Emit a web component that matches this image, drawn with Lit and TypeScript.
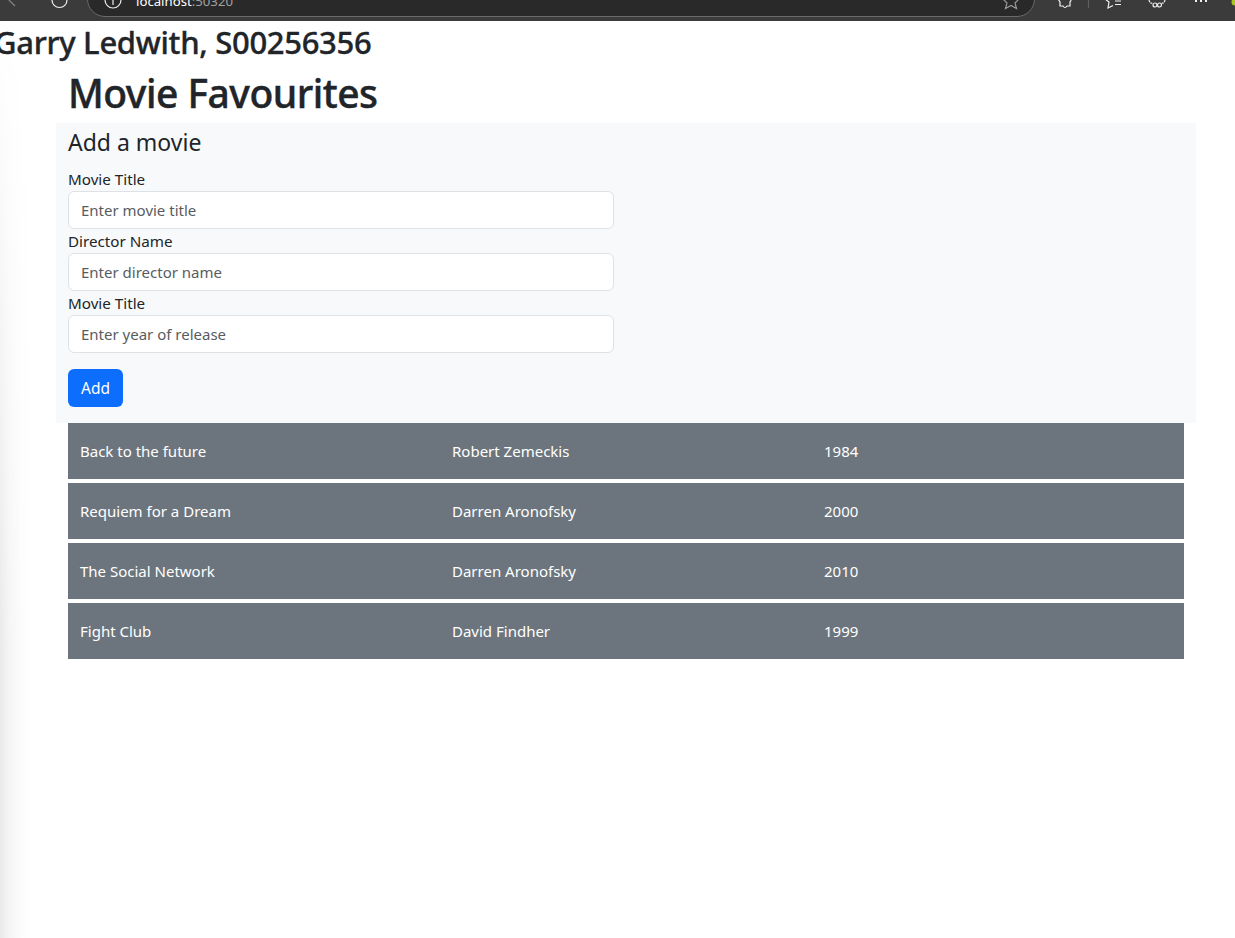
import { LitElement, css, html, svg } from "lit";
import { customElement } from "lit/decorators.js";

const movies = [
  { title: "Back to the future", director: "Robert Zemeckis", year: 1984 },
  { title: "Requiem for a Dream", director: "Darren Aronofsky", year: 2000 },
  { title: "The Social Network", director: "Darren Aronofsky", year: 2010 },
  { title: "Fight Club", director: "David Findher", year: 1999 },
];

const fields = [
  { label: "Movie Title", placeholder: "Enter movie title" },
  { label: "Director Name", placeholder: "Enter director name" },
  { label: "Movie Title", placeholder: "Enter year of release" },
];

@customElement("app-root")
export class AppRoot extends LitElement {
  static styles = css`
    :host {
      display: block;
      min-height: 938px;
      position: relative;
      overflow: hidden;
      background: #fff;
      color: #212529;
      font-family: "Noto Sans", "Open Sans", sans-serif;
      font-size: 16px;
    }
    .edge {
      position: absolute;
      top: 21px;
      bottom: 0;
      left: 0;
      width: 32px;
      background: linear-gradient(to right, #e9e9e9, #f5f5f5 30%, #fcfcfc 65%, #ffffff);
      -webkit-mask-image: linear-gradient(to bottom, transparent, #000 70%);
      mask-image: linear-gradient(to bottom, transparent, #000 70%);
      pointer-events: none;
    }
    .toolbar {
      height: 21px;
      background: #3b3b3b;
      overflow: hidden;
      position: relative;
    }
    .address {
      position: absolute;
      left: 87px;
      width: 948px;
      top: -20px;
      height: 37px;
      box-sizing: border-box;
      background: #292929;
      border: 1px solid #6a6a6a;
      border-radius: 18px;
    }
    .url {
      position: absolute;
      left: 136px;
      top: -9px;
      font-family: "Noto Sans", sans-serif;
      font-size: 13.2px;
      line-height: 20px;
      color: #fff;
      white-space: nowrap;
    }
    .url span {
      color: #a0a0a0;
    }
    .toolbar svg {
      position: absolute;
      top: 0;
      left: 0;
    }
    .page {
      position: relative;
    }
    .name {
      margin: 0 0 0 -6px;
      font-size: 31px;
      font-weight: 500;
      line-height: 42px;
      letter-spacing: -0.3px;
      white-space: nowrap;
      -webkit-text-stroke: 0.35px #212529;
    }
    .container {
      width: 1140px;
      margin-left: 56px;
      box-sizing: border-box;
    }
    h1 {
      margin: 0;
      padding-left: 12px;
      font-size: 39px;
      font-weight: 500;
      line-height: 60px;
      letter-spacing: -0.5px;
      -webkit-text-stroke: 0.45px #212529;
    }
    .panel {
      background: #f8f9fa;
      height: 300px;
      padding: 0 12px;
      box-sizing: border-box;
    }
    h2 {
      margin: 0 0 6px;
      font-size: 23px;
      font-weight: 400;
      line-height: 38px;
    }
    .field {
      width: 546px;
    }
    label {
      display: block;
      font-size: 15.2px;
      line-height: 24px;
    }
    input {
      display: block;
      width: 100%;
      height: 38px;
      box-sizing: border-box;
      padding: 6px 12px;
      border: 1px solid #dee2e6;
      border-radius: 6px;
      background: #fff;
      font: inherit;
      font-size: 15px;
      color: #212529;
    }
    input::placeholder {
      color: #595c5f;
      opacity: 1;
    }
    button {
      display: block;
      margin-top: 16px;
      width: 55px;
      height: 38px;
      padding: 0;
      border: 0;
      border-radius: 6px;
      background: #0d6efd;
      color: #fff;
      font: inherit;
      font-size: 15.5px;
    }
    .rows {
      display: flex;
      flex-direction: column;
      gap: 4px;
      padding: 0 12px;
    }
    .row {
      display: grid;
      grid-template-columns: repeat(3, 1fr);
      background: #6c757d;
      color: #fff;
      height: 56px;
      align-items: center;
      font-size: 15px;
    }
    .row div {
      padding: 0 12px;
    }
  `;

  private icons() {
    return svg`
      <g fill="none" stroke-width="1.2">
        <path d="M8 -1 H23 M8 -1 L15 6" stroke="#858585" />
        <path d="M52 0 A7.5 7.5 0 0 0 67 0" stroke="#f0f0f0" />
        <circle cx="113" cy="0" r="8" stroke="#f0f0f0" />
        <path d="M113 -1 V5" stroke="#f0f0f0" />
        <path d="M1003 -1 L1007 3 L1005.5 8.5 L1011 5.5 L1016.5 8.5 L1015 3 L1019 -1" stroke="#999" />
        <path d="M1058 -1 L1060 2 V6 H1063 Q1065 9 1067 6 H1070 V2 Q1072 0 1070 -2" stroke="#f0f0f0" />
        <path d="M1088.5 0 V8" stroke="#5f5f5f" />
        <path d="M1105 -1 L1109 2 L1108 8 L1113 5.5" stroke="#f0f0f0" />
        <path d="M1115 1 H1121 M1115 4.5 H1121" stroke="#f0f0f0" />
        <path d="M1149 0 Q1150 4 1153 3 M1165 0 Q1164 4 1161 3" stroke="#f0f0f0" stroke-dasharray="2 1" />
        <circle cx="1155" cy="5" r="2" stroke="#f0f0f0" />
        <circle cx="1159.5" cy="5" r="2" stroke="#f0f0f0" />
      </g>
      <g fill="#f0f0f0">
        <rect x="1195" y="0" width="2" height="2" />
        <rect x="1200" y="0" width="2" height="2" />
        <rect x="1205" y="0" width="2" height="2" />
      </g>
      <circle cx="1235" cy="2" r="3.5" fill="#a8c520" />
    `;
  }

  render() {
    return html`
      <div class="toolbar">
        <div class="address"></div>
        <div class="url">localhost<span>:50320</span></div>
        <svg width="1235" height="21" viewBox="0 0 1235 21">${this.icons()}</svg>
      </div>
      <div class="edge"></div>
      <div class="page">
        <div class="name">Garry Ledwith, S00256356</div>
        <div class="container">
          <h1>Movie Favourites</h1>
          <form class="panel" @submit=${(e: Event) => e.preventDefault()}>
            <h2 class="heading">Add a movie</h2>
            ${fields.map(
              (f) => html`
                <div class="field">
                  <label>${f.label}</label>
                  <input type="text" placeholder=${f.placeholder} />
                </div>
              `
            )}
            <button type="submit">Add</button>
          </form>
          <div class="rows">
            ${movies.map(
              (m) => html`
                <div class="row">
                  <div>${m.title}</div>
                  <div>${m.director}</div>
                  <div>${m.year}</div>
                </div>
              `
            )}
          </div>
        </div>
      </div>
    `;
  }
}
